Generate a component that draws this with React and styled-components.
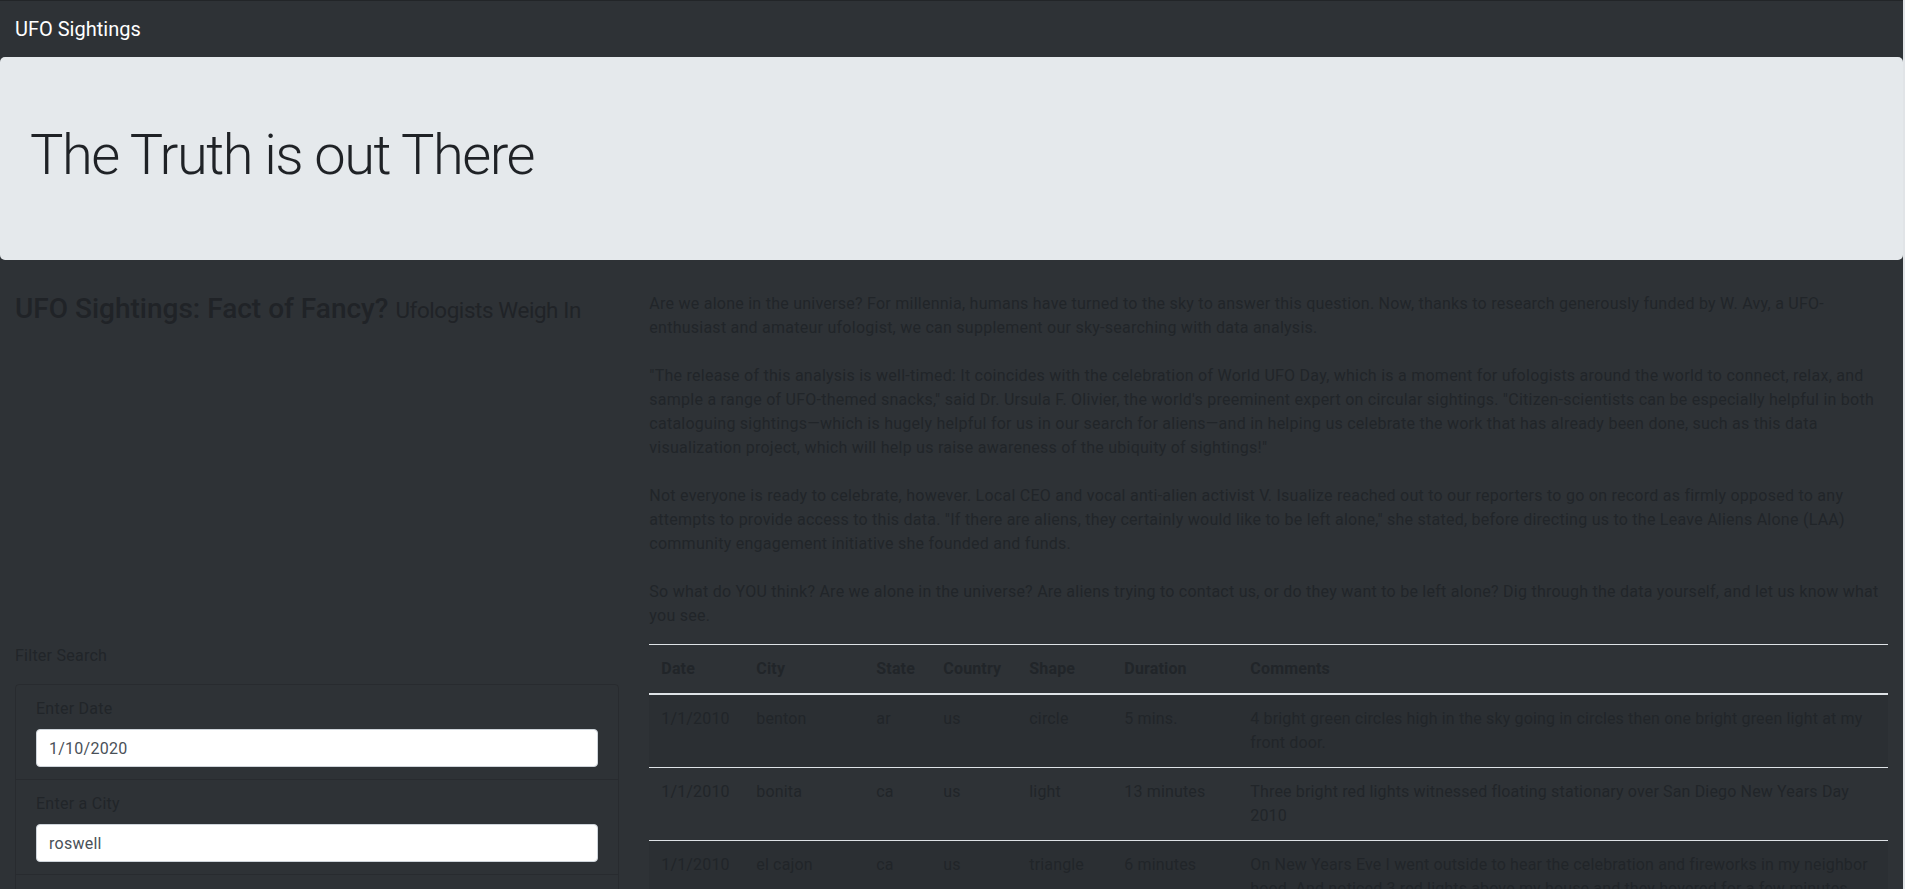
import styled, { createGlobalStyle } from 'styled-components'

const GlobalStyle = createGlobalStyle`
  * { box-sizing: border-box; }
  body {
    margin: 0;
    background: #e1e4e7;
    font-family: Roboto, "Liberation Sans", Arial, sans-serif;
    font-size: 16px;
    line-height: 1.5;
    letter-spacing: 0.25px;
    color: #212529;
  }
`

const Page = styled.div`
  width: 1903px;
  min-height: 100vh;
  background: #2e3236;
`

const Navbar = styled.nav`
  display: flex;
  align-items: center;
  padding: 8px 15px;
  border-top: 1px solid #222528;
  background: #2e3236;
`

const Brand = styled.a`
  color: #fff;
  font-size: 20px;
  line-height: 30px;
  letter-spacing: 0;
  padding: 5px 0;
  text-decoration: none;
`

const Jumbotron = styled.header`
  background: #e5e9ec;
  border-radius: 5px;
  padding: 65px 30px 63px;
  margin-bottom: 32px;
`

const Display = styled.h1`
  margin: 0 0 8px;
  font-size: 56px;
  font-weight: 300;
  line-height: 1.2;
  letter-spacing: -1.5px;
  color: #1f2226;
`

const Container = styled.main`
  padding: 0 15px;
`

const Row = styled.div`
  display: flex;
  margin: 0 -15px;
`

const Col = styled.div`
  flex: 0 0 ${p => (p.span / 12) * 100}%;
  max-width: ${p => (p.span / 12) * 100}%;
  padding: 0 15px;
`

const Title = styled.h3`
  margin: 0 0 8px;
  font-size: 28px;
  font-weight: 500;
  line-height: 1.2;
  letter-spacing: 0;
  color: #202327;

  small {
    font-size: 80%;
    font-weight: 400;
    letter-spacing: -0.4px;
  }
`

const Article = styled.p`
  margin: 0 0 16px;
  color: #212529;
`

const FilterLabel = styled.p`
  margin: 0 0 16px;
  color: #212529;
`

const ListGroup = styled.ul`
  list-style: none;
  margin: 0;
  padding: 0;
  border: 1px solid rgba(0, 0, 0, 0.125);
  border-radius: 4px;
`

const ListItem = styled.li`
  padding: 12px 20px;
  & + & {
    border-top: 1px solid rgba(0, 0, 0, 0.125);
  }
`

const FieldLabel = styled.label`
  display: block;
  margin-bottom: 8px;
  color: #212529;
`

const Input = styled.input`
  display: block;
  width: 100%;
  height: 38px;
  padding: 6px 12px;
  font-family: inherit;
  font-size: 16px;
  line-height: 1.5;
  letter-spacing: inherit;
  color: #495057;
  background: #fff;
  border: 1px solid #ced4da;
  border-radius: 4px;
`

const Table = styled.table`
  width: 100%;
  border-collapse: collapse;
  table-layout: fixed;
  margin-bottom: 16px;
  letter-spacing: 0.15px;
  color: #212529;
`

const Th = styled.th`
  width: ${p => (p.w ? `${p.w}px` : 'auto')};
  padding: 12px;
  text-align: left;
  vertical-align: bottom;
  font-weight: 700;
  border-top: 1px solid #dee2e6;
  border-bottom: 2px solid #dee2e6;
`

const Tr = styled.tr`
  &:nth-of-type(odd) {
    background: rgba(0, 0, 0, 0.05);
  }
`

const Td = styled.td`
  padding: 12px;
  vertical-align: top;
  border-top: 1px solid #dee2e6;
`

const columns = [
  { key: 'date', label: 'Date', w: 95 },
  { key: 'city', label: 'City', w: 120 },
  { key: 'state', label: 'State', w: 67 },
  { key: 'country', label: 'Country', w: 86 },
  { key: 'shape', label: 'Shape', w: 95 },
  { key: 'duration', label: 'Duration', w: 126 },
  { key: 'comments', label: 'Comments' },
]

const sightings = [
  { date: '1/1/2010', city: 'benton', state: 'ar', country: 'us', shape: 'circle', duration: '5 mins.', comments: '4 bright green circles high in the sky going in circles then one bright green light at my front door.' },
  { date: '1/1/2010', city: 'bonita', state: 'ca', country: 'us', shape: 'light', duration: '13 minutes', comments: 'Three bright red lights witnessed floating stationary over San Diego New Years Day 2010' },
  { date: '1/1/2010', city: 'el cajon', state: 'ca', country: 'us', shape: 'triangle', duration: '6 minutes', comments: 'On New Years Eve I went outside to hear the celebration and fireworks in my neighbor hood. And noticed 3 red lights above my house and they hovered for a few minutes.' },
  { date: '1/1/2010', city: 'el cajon', state: 'ca', country: 'us', shape: 'light', duration: '5 minutes', comments: 'Three orange lights moving in a straight line then vanishing one by one.' },
]

const filters = [
  { id: 'datetime', label: 'Enter Date', value: '1/10/2020' },
  { id: 'city', label: 'Enter a City', value: 'roswell' },
  { id: 'state', label: 'Enter a State', value: '' },
  { id: 'country', label: 'Enter a Country', value: '' },
  { id: 'shape', label: 'Enter a Shape', value: '' },
]

const App = () => {
  return (
    <Page>
      <GlobalStyle />
      <Navbar>
        <Brand href="#">UFO Sightings</Brand>
      </Navbar>

      <Jumbotron>
        <Display>The Truth is out There</Display>
      </Jumbotron>

      <Container>
        <Row>
          <Col span={4}>
            <Title>
              UFO Sightings: Fact of Fancy? <small>Ufologists Weigh In</small>
            </Title>
          </Col>
          <Col span={8}>
            <Article>
              Are we alone in the universe? For millennia, humans have turned to the sky to answer this question. Now, thanks to research generously funded by W. Avy, a UFO-enthusiast and amateur ufologist, we can supplement our sky-searching with data analysis.
              <br /><br />
              "The release of this analysis is well-timed: It coincides with the celebration of World UFO Day, which is a moment for ufologists around the world to connect, relax, and sample a range of UFO-themed snacks," said Dr. Ursula F. Olivier, the world's preeminent expert on circular sightings. "Citizen-scientists can be especially helpful in both cataloguing sightings—which is hugely helpful for us in our search for aliens—and in helping us celebrate the work that has already been done, such as this data visualization project, which will help us raise awareness of the ubiquity of sightings!"
              <br /><br />
              Not everyone is ready to celebrate, however. Local CEO and vocal anti-alien activist V. Isualize reached out to our reporters to go on record as firmly opposed to any attempts to provide access to this data. "If there are aliens, they certainly would like to be left alone," she stated, before directing us to the Leave Aliens Alone (LAA) community engagement initiative she founded and funds.
              <br /><br />
              So what do YOU think? Are we alone in the universe? Are aliens trying to contact us, or do they want to be left alone? Dig through the data yourself, and let us know what you see.
            </Article>
          </Col>
        </Row>

        <Row>
          <Col span={4}>
            <form>
              <FilterLabel>Filter Search</FilterLabel>
              <ListGroup>
                {filters.map(f => (
                  <ListItem key={f.id}>
                    <FieldLabel htmlFor={f.id}>{f.label}</FieldLabel>
                    <Input id={f.id} type="text" defaultValue={f.value} />
                  </ListItem>
                ))}
              </ListGroup>
            </form>
          </Col>
          <Col span={8}>
            <Table>
              <thead>
                <tr>
                  {columns.map(c => (
                    <Th key={c.key} w={c.w}>{c.label}</Th>
                  ))}
                </tr>
              </thead>
              <tbody>
                {sightings.map((s, i) => (
                  <Tr key={i}>
                    {columns.map(c => (
                      <Td key={c.key}>{s[c.key]}</Td>
                    ))}
                  </Tr>
                ))}
              </tbody>
            </Table>
          </Col>
        </Row>
      </Container>
    </Page>
  )
}

export default App
